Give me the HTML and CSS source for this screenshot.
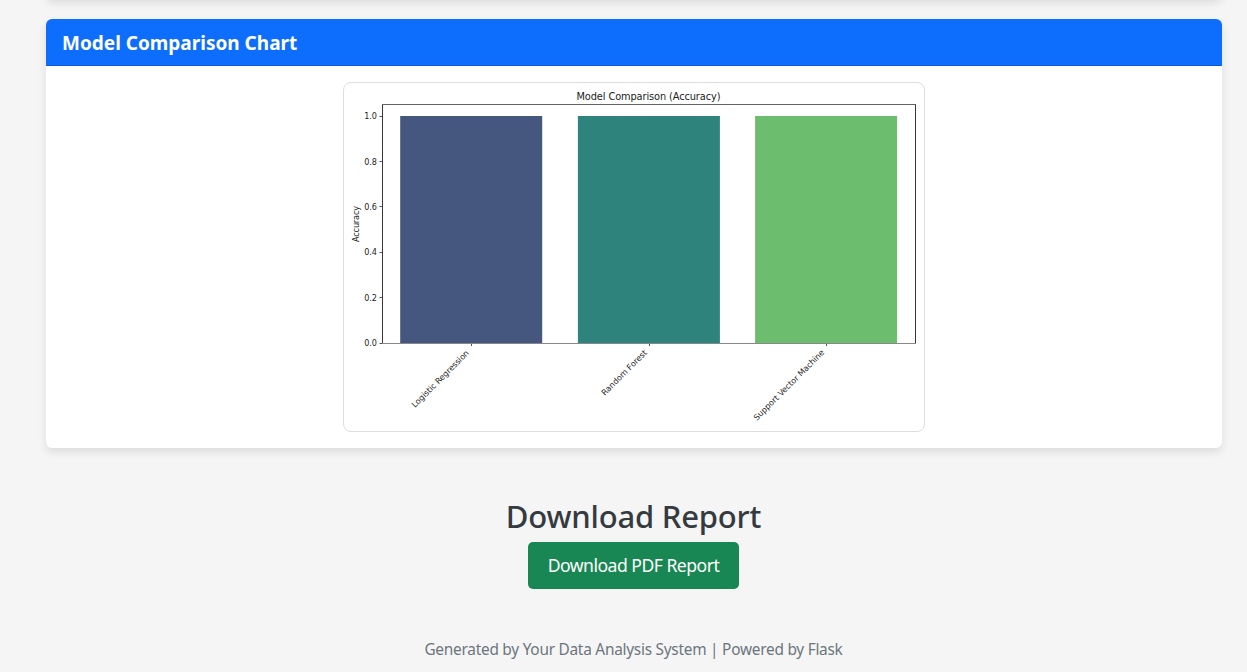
FILE: index.html
```html
<!DOCTYPE html>
<html lang="en">
<head>
<meta charset="utf-8">
<title>Data Analysis Report</title>
<link rel="stylesheet" href="styles.css">
</head>
<body>
<main class="container">
  <section class="card card-previous"></section>
  <section class="card">
    <h2 class="card-header"><span>Model Comparison Chart</span></h2>
    <div class="card-body">
      <svg class="chart" viewBox="344 83 580 348" role="img" aria-label="Model Comparison (Accuracy)">
        <rect x="400.2" y="116" width="142" height="227.2" fill="#46577f"/>
        <rect x="577.9" y="116" width="142" height="227.2" fill="#2e837d"/>
        <rect x="755.1" y="116" width="142" height="227.2" fill="#6cbd6e"/>
        <g class="axis">
          <path class="side" d="M382.5 104V344M915.5 104V344"/>
          <path class="top" d="M382 104.5H916"/>
          <path class="bottom" d="M382 343.5H916"/>
          <path class="tick" d="M379.5 116.5H382M379.5 161.5H382M379.5 206.5H382M379.5 252.5H382M379.5 297.5H382M379.5 343.5H382M471.5 344V346M649.5 344V346M826.5 344V346"/>
        </g>
        <text class="title" x="648.5" y="100" textLength="144" text-anchor="middle">Model Comparison (Accuracy)</text>
        <g class="labels">
          <g text-anchor="end">
            <text x="377" y="119">1.0</text>
            <text x="377" y="164.5">0.8</text>
            <text x="377" y="210">0.6</text>
            <text x="377" y="255">0.4</text>
            <text x="377" y="300.5">0.2</text>
            <text x="377" y="346">0.0</text>
            <text transform="translate(469.5 353.5) rotate(-45)" textLength="77">Logistic Regression</text>
            <text transform="translate(647.5 353.2) rotate(-45)" textLength="60.5">Random Forest</text>
            <text transform="translate(824.8 353) rotate(-45)" textLength="96">Support Vector Machine</text>
          </g>
          <text transform="translate(358.5 224) rotate(-90)" text-anchor="middle" textLength="36">Accuracy</text>
        </g>
      </svg>
    </div>
  </section>
  <section class="download">
    <h2 class="download-title">Download Report</h2>
    <a class="btn" href="#">Download PDF Report</a>
  </section>
  <footer class="footer">Generated by Your Data Analysis System | Powered by Flask</footer>
</main>
</body>
</html>
```
FILE: styles.css
```css
* { box-sizing: border-box; }
body {
  margin: 0;
  height: 672px;
  overflow: hidden;
  background: #f5f5f5;
  color: #343a40;
  font: 16px/24px "Noto Sans", "Open Sans", sans-serif;
}
.container {
  display: flex;
  flex-direction: column;
  padding: 0 25px 0 46px;
}
.card {
  margin-bottom: 20px;
  background: #fff;
  border-radius: 6px;
  box-shadow: 0 4px 8px rgba(0, 0, 0, .1);
}
.card-previous { height: 20px; margin-top: -21px; }
.card-header {
  height: 47px;
  margin: 0;
  padding: 0 16px;
  border-bottom: 1px solid #0b5cd8;
  border-radius: 6px 6px 0 0;
  background: #0d6efd;
  color: #fff;
  font-size: 19px;
  font-weight: 700;
  line-height: 49px;
}
.card-body { padding: 16px; text-align: center; }
.chart {
  display: block;
  width: 582px;
  height: 350px;
  margin: 0 auto;
  border: 1px solid #ddd;
  border-radius: 8px;
}
.axis path { fill: none; stroke-width: 1; }
.axis .side { stroke: #383838; }
.axis .top { stroke: #626262; }
.axis .bottom { stroke: #888; }
.axis .tick { stroke: #555; }
.chart text { font-family: "DejaVu Sans", sans-serif; fill: #1c1c1c; }
.chart .title { font-size: 9.8px; }
.chart .labels text { font-size: 8.1px; }
.download {
  display: flex;
  flex-direction: column;
  align-items: center;
  padding: 29px 1px 0 0;
}
.download-title {
  margin: 0 0 7px;
  font-size: 31px;
  font-weight: 500;
  line-height: 38px;
  letter-spacing: -.2px;
}
.btn {
  width: 211px;
  height: 47px;
  border-radius: 5px;
  background: #198754;
  color: #fff;
  font-size: 17.6px;
  line-height: 47px;
  letter-spacing: -.52px;
  text-align: center;
  text-decoration: none;
  white-space: nowrap;
}
.footer {
  margin-top: 49px;
  padding-right: 1px;
  text-align: center;
  color: #6c757d;
  font-size: 15.4px;
  letter-spacing: -.25px;
}
```
